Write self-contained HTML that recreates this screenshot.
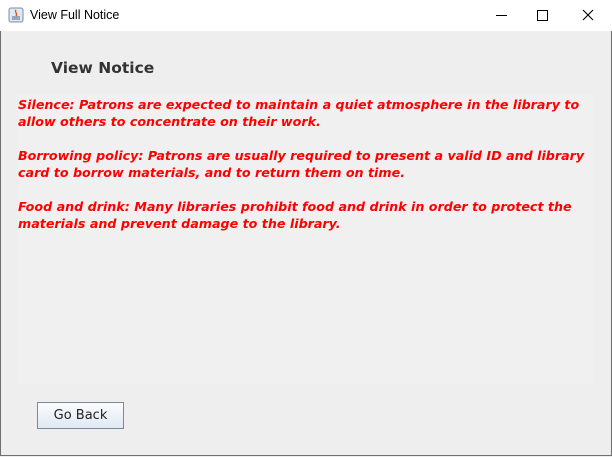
<!DOCTYPE html>
<html><head><style>
html,body{margin:0;padding:0;width:612px;height:457px;overflow:hidden;background:#eeeeee;font-family:"DejaVu Sans",sans-serif}
.win{position:absolute;left:0;top:0;width:610px;height:455px;border:1px solid #6f6f6f;border-top:none;background:#eeeeee}
.tb{position:absolute;left:0;top:0;width:612px;height:31px;background:#fff}
.tt{position:absolute;left:30px;top:8px;font-family:"Liberation Sans",sans-serif;font-size:12.5px;color:#000}
.h{position:absolute;left:51px;top:59px;font-size:15.5px;font-weight:bold;color:#333;font-family:"DejaVu Sans",sans-serif}
.ta{position:absolute;left:18px;top:94px;width:576px;height:290px;background:#f0f0f0}
.ta div{position:absolute;left:0;font-size:12.68px;font-weight:bold;font-style:oblique;color:#ff0000;white-space:pre;line-height:17px}
.btn{position:absolute;left:37px;top:402px;width:85px;height:25px;border:1px solid #7a8a99;background:linear-gradient(#fbfcfe,#dfe8f2);font-size:13px;color:#222;text-align:center;line-height:25px}
</style></head><body>
<div class="win"></div>
<div class="tb">
<svg style="position:absolute;left:8px;top:7px" width="16" height="16"><rect x="1" y="1" width="14" height="14" rx="2" fill="#dfe7f0" stroke="#7a8ea8"/><path d="M8 3c-2 2 2 3 0 6" stroke="#e05010" fill="none" stroke-width="1.3"/><path d="M4 10h8M4 12h8" stroke="#4a6a90"/></svg>
<div class="tt">View Full Notice</div>
<div style="position:absolute;left:496px;top:15px;width:11px;height:1px;background:#000"></div>
<div style="position:absolute;left:537px;top:10px;width:9px;height:9px;border:1px solid #000"></div>
<svg style="position:absolute;left:582px;top:9px" width="12" height="12"><path d="M1 1L11 11M11 1L1 11" stroke="#000" stroke-width="1.1"/></svg>
</div>
<div class="h">View Notice</div>
<div class="ta">
<div style="top:2px">Silence: Patrons are expected to maintain a quiet atmosphere in the library to
allow others to concentrate on their work.</div>
<div style="top:53px">Borrowing policy: Patrons are usually required to present a valid ID and library
card to borrow materials, and to return them on time.</div>
<div style="top:104px">Food and drink: Many libraries prohibit food and drink in order to protect the
materials and prevent damage to the library.</div>
</div>
<div class="btn">Go Back</div>
</body></html>
